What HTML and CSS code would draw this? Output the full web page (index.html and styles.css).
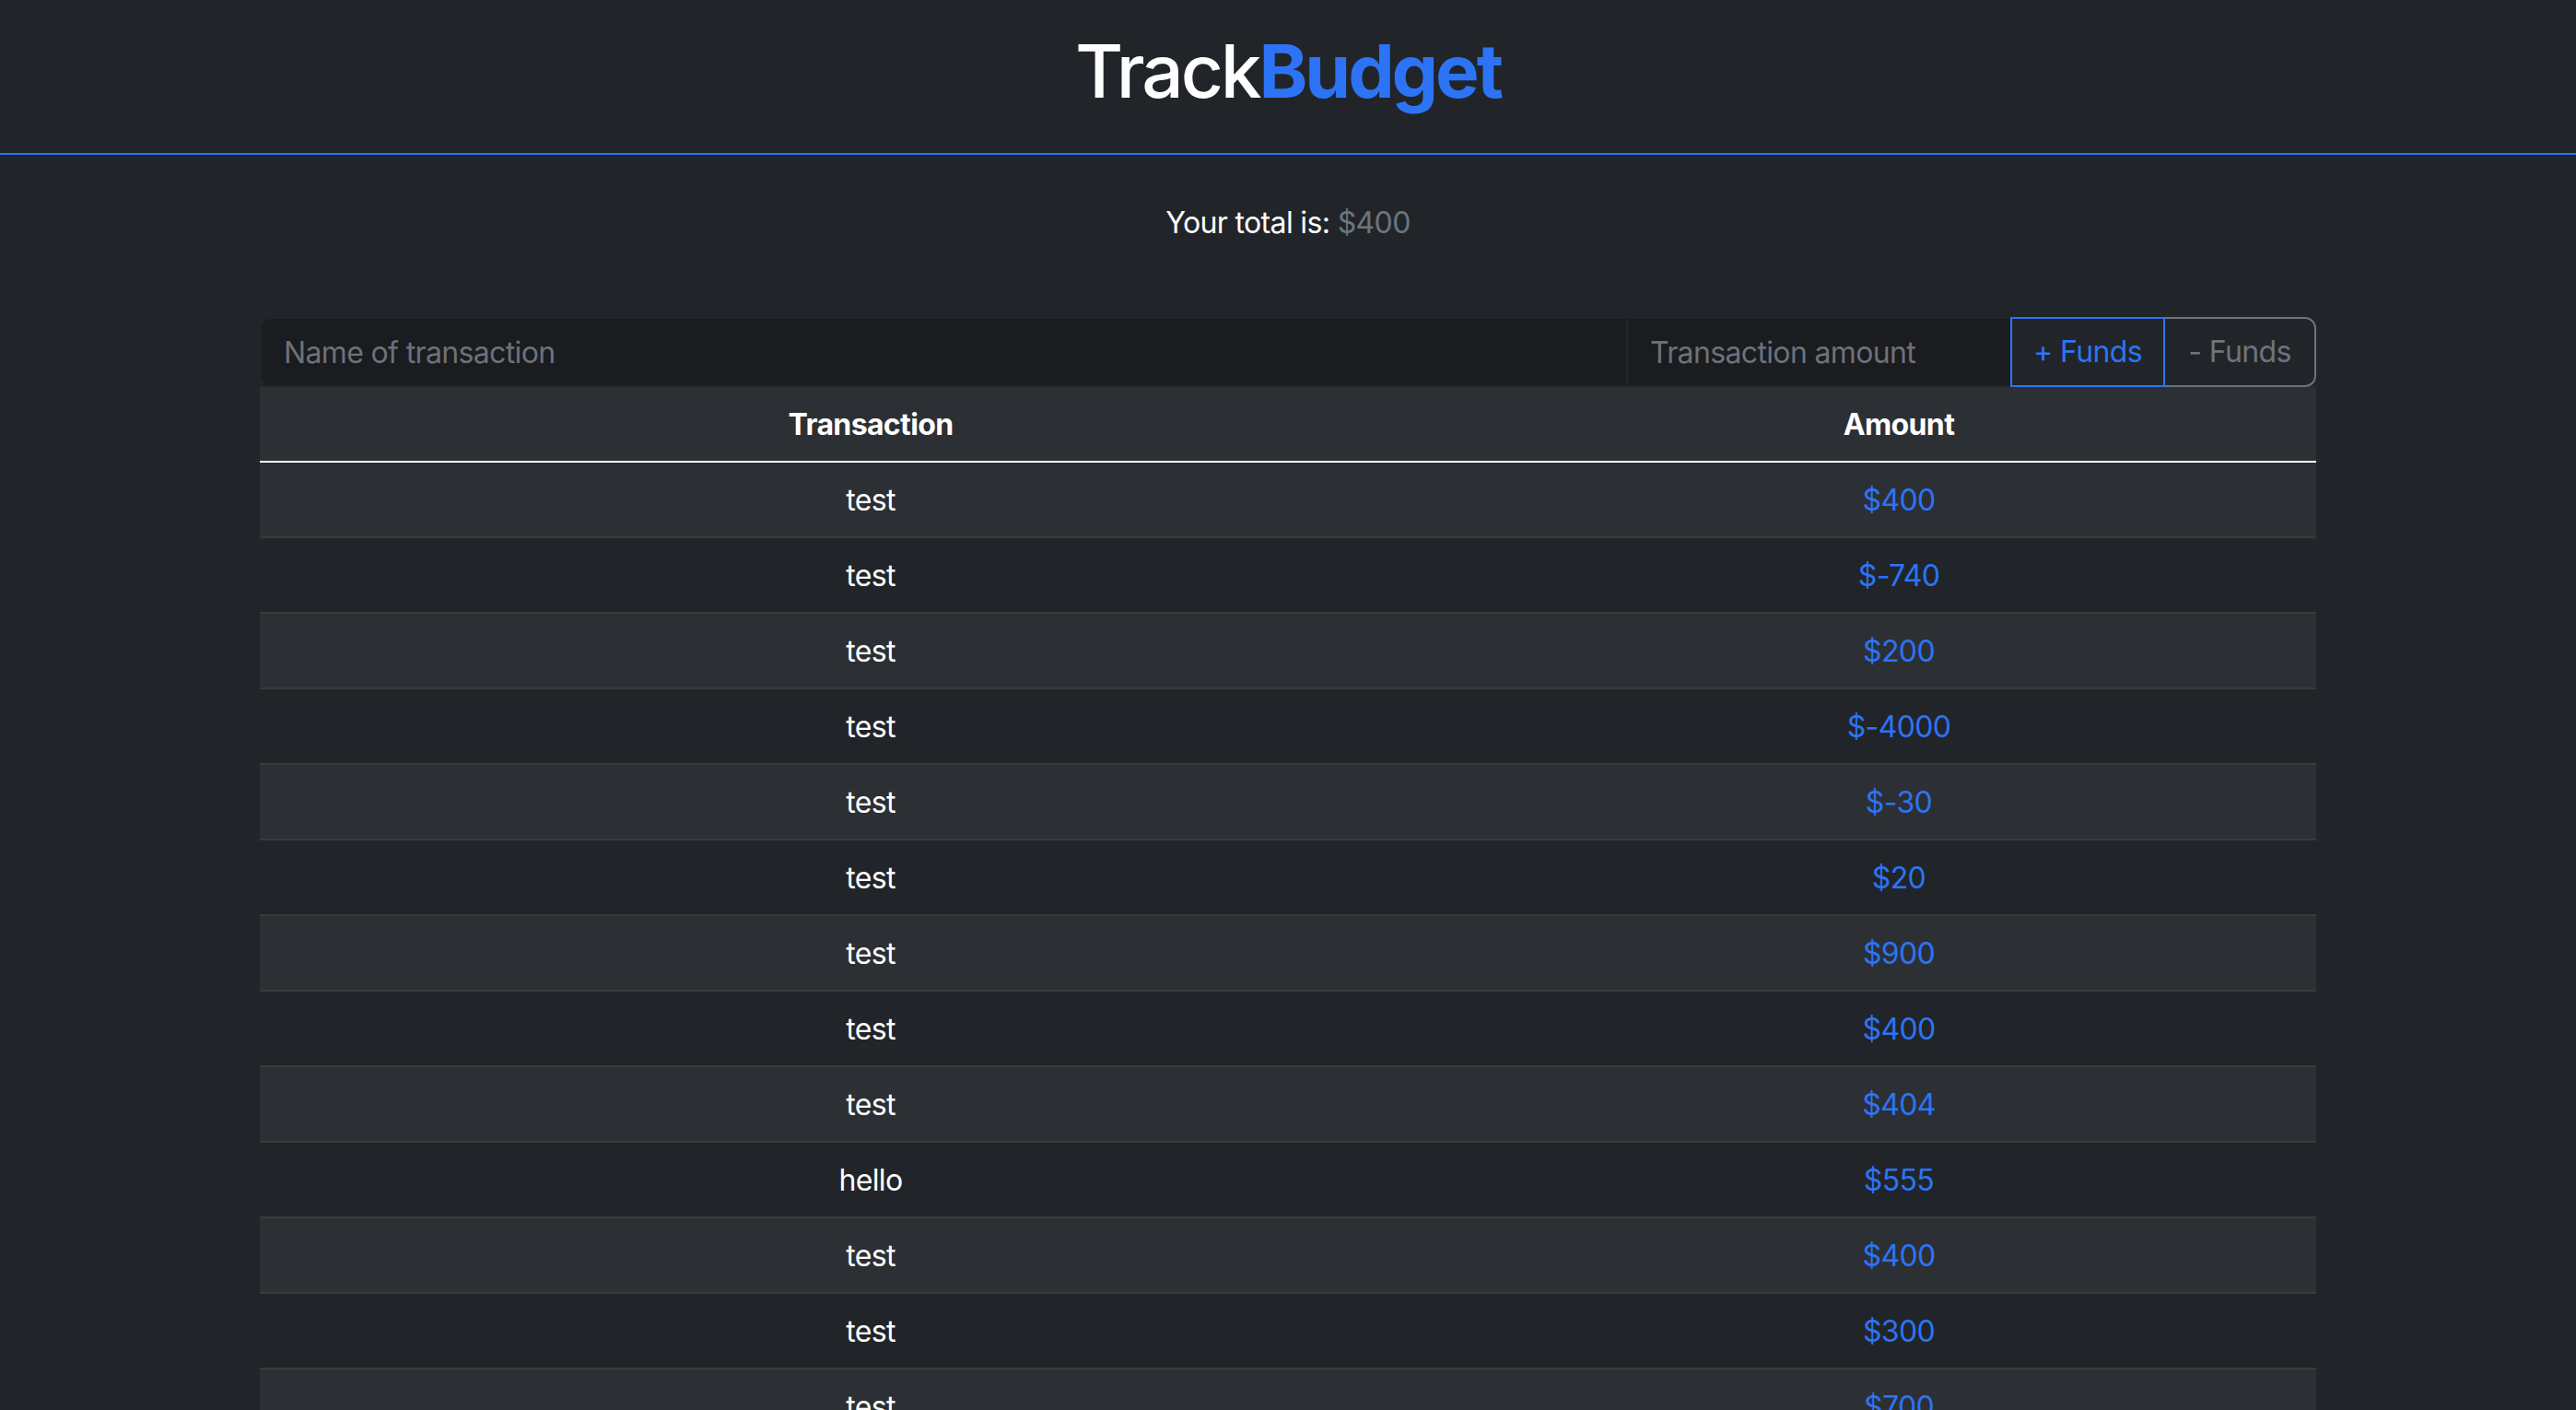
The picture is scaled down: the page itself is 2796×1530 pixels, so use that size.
FILE: index.html
```html
<!DOCTYPE html>
<html lang="en">
<head>
<meta charset="utf-8">
<title>TrackBudget</title>
<link rel="stylesheet" href="styles.css">
</head>
<body>
<header class="topbar">
  <h1 class="brand">Track<span class="brand-accent">Budget</span></h1>
</header>
<main class="container">
  <p class="total">Your total is: <span class="total-amount">$400</span></p>
  <form class="entry">
    <input class="field field-name" type="text" placeholder="Name of transaction">
    <input class="field field-amount" type="text" placeholder="Transaction amount">
    <button class="btn btn-add" type="button">+ Funds</button>
    <button class="btn btn-sub" type="button">- Funds</button>
  </form>
  <table class="ledger">
    <thead>
      <tr><th class="col-name">Transaction</th><th class="col-amount">Amount</th></tr>
    </thead>
    <tbody>
      <tr><td>test</td><td class="amount">$400</td></tr>
      <tr><td>test</td><td class="amount">$-740</td></tr>
      <tr><td>test</td><td class="amount">$200</td></tr>
      <tr><td>test</td><td class="amount">$-4000</td></tr>
      <tr><td>test</td><td class="amount">$-30</td></tr>
      <tr><td>test</td><td class="amount">$20</td></tr>
      <tr><td>test</td><td class="amount">$900</td></tr>
      <tr><td>test</td><td class="amount">$400</td></tr>
      <tr><td>test</td><td class="amount">$404</td></tr>
      <tr><td>hello</td><td class="amount">$555</td></tr>
      <tr><td>test</td><td class="amount">$400</td></tr>
      <tr><td>test</td><td class="amount">$300</td></tr>
      <tr><td>test</td><td class="amount">$700</td></tr>
    </tbody>
  </table>
</main>
</body>
</html>
```

FILE: styles.css
```css
html, body {
  margin: 0;
  padding: 0;
  height: 100%;
  overflow: hidden;
}
body {
  background: #212529;
  color: #ffffff;
  font-family: Inter, "Noto Sans", "Liberation Sans", sans-serif;
  font-size: 32px;
  line-height: 48px;
  letter-spacing: -0.02em;
}
.topbar {
  padding: 29px 0 41px;
  border-bottom: 2px solid #2c74f5;
  text-align: center;
}
.brand {
  margin: 0;
  font-size: 80px;
  line-height: 96px;
  font-weight: 500;
  letter-spacing: -0.038em;
  color: #ffffff;
}
.brand-accent {
  font-weight: 700;
  color: #2c74f5;
}
.container {
  max-width: 2232px;
  margin: 0 auto;
  padding: 0 24px;
}
.total {
  margin: 50px 0 78px;
  text-align: center;
}
.total-amount {
  color: #6c757d;
}
.entry {
  display: flex;
  margin: 0;
}
.field {
  box-sizing: border-box;
  height: 76px;
  padding: 12px 24px;
  border: 2px solid #212529;
  background: #1b1c1f;
  color: #ffffff;
  font-family: inherit;
  font-size: 32px;
  line-height: 48px;
  letter-spacing: -0.02em;
  outline: none;
}
.field::placeholder {
  color: #6c727a;
}
.field-name {
  flex: 1 1 auto;
  min-width: 0;
  border-radius: 12px 0 0 12px;
}
.field-amount {
  flex: 0 0 419px;
  width: 419px;
  margin-left: -2px;
}
.btn {
  box-sizing: border-box;
  height: 76px;
  margin-left: -2px;
  padding: 12px 0;
  background: transparent;
  font-family: inherit;
  font-size: 32px;
  line-height: 48px;
  letter-spacing: -0.02em;
  text-align: center;
  cursor: pointer;
}
.btn-add {
  flex: 0 0 168px;
  border: 2px solid #2c74f5;
  color: #2c74f5;
  position: relative;
  z-index: 1;
}
.btn-sub {
  flex: 0 0 166px;
  border: 2px solid #6c757d;
  color: #6c757d;
  border-radius: 0 12px 12px 0;
}
.ledger {
  width: 100%;
  border-collapse: collapse;
  table-layout: fixed;
}
.ledger th,
.ledger td {
  box-sizing: border-box;
  padding: 17px 16px 15px;
  text-align: center;
  line-height: 48px;
  border-bottom: 2px solid #373b3e;
}
.ledger thead th {
  background: #2c3035;
  font-weight: 700;
  border-bottom: 2px solid #ffffff;
}
.col-name {
  width: 1326px;
}
.ledger tbody tr:nth-child(odd) td {
  background: #2c3035;
}
.ledger tbody tr:nth-child(even) td {
  background: #212529;
}
.amount {
  color: #2c74f5;
}
```
